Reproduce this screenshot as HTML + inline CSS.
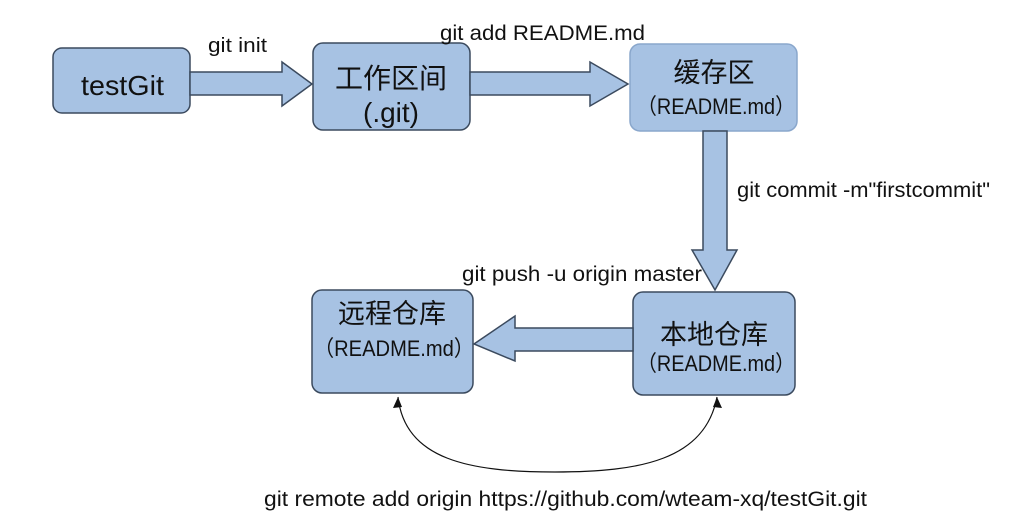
<!DOCTYPE html>
<html><head><meta charset="utf-8"><style>
html,body{margin:0;padding:0;background:#fff;}
svg{display:block}
text{font-family:"Liberation Sans","Noto Sans CJK SC",sans-serif;fill:#111;}
</style></head><body>
<svg width="1011" height="528" viewBox="0 0 1011 528">
<g fill="#a7c2e3" stroke="#3b4a5e" stroke-width="1.5">
<rect x="53" y="48" width="137" height="65" rx="9"/>
<rect x="313" y="43" width="157" height="87" rx="10"/>
<rect x="630" y="44" width="167" height="87" rx="10" stroke="#8aa7cc"/>
<rect x="633" y="292" width="162" height="103" rx="10"/>
<rect x="312" y="290" width="161" height="103" rx="10"/>
<path d="M190,72 H282 V62 L312,84 L282,106 V95 H190 Z"/>
<path d="M470,72 H590 V62 L628,84 L590,106 V95 H470 Z"/>
<path d="M703,131 V250 H692 L715,290 L737,250 H727 V131 Z"/>
<path d="M633,328 H515 V316 L474,344 L515,361 V351 H633 Z"/>
</g>
<path d="M398,397 C405,460 470,472 555,472 C640,472 705,460 717,397" fill="none" stroke="#111" stroke-width="1.2"/>
<path d="M398,397 L393,408 L402,407 Z" fill="#111"/>
<path d="M717,397 L713,407 L722,408 Z" fill="#111"/>
<text x="81" y="95" font-size="28" textLength="83" lengthAdjust="spacingAndGlyphs">testGit</text>
<text x="335" y="88" font-size="28" textLength="112" lengthAdjust="spacingAndGlyphs">工作区间</text>
<text x="391" y="122" font-size="28" text-anchor="middle">(.git)</text>
<text x="714" y="82" font-size="27" text-anchor="middle">缓存区</text>
<text x="637" y="114" font-size="22" textLength="158" lengthAdjust="spacingAndGlyphs">（README.md）</text>
<text x="392" y="323" font-size="27" text-anchor="middle">远程仓库</text>
<text x="314" y="356" font-size="22" textLength="160" lengthAdjust="spacingAndGlyphs">（README.md）</text>
<text x="714" y="344" font-size="27" text-anchor="middle">本地仓库</text>
<text x="637" y="371" font-size="22" textLength="158" lengthAdjust="spacingAndGlyphs">（README.md）</text>
<text x="208" y="52" font-size="20" textLength="59" lengthAdjust="spacingAndGlyphs">git init</text>
<text x="440" y="40" font-size="21" textLength="205" lengthAdjust="spacingAndGlyphs">git add README.md</text>
<text x="737" y="197" font-size="21" textLength="253" lengthAdjust="spacingAndGlyphs">git commit -m"firstcommit"</text>
<text x="462" y="281" font-size="21" textLength="240" lengthAdjust="spacingAndGlyphs">git push -u origin master</text>
<text x="264" y="506" font-size="21" textLength="603" lengthAdjust="spacingAndGlyphs">git remote add origin https://github.com/wteam-xq/testGit.git</text>
</svg>
</body></html>
